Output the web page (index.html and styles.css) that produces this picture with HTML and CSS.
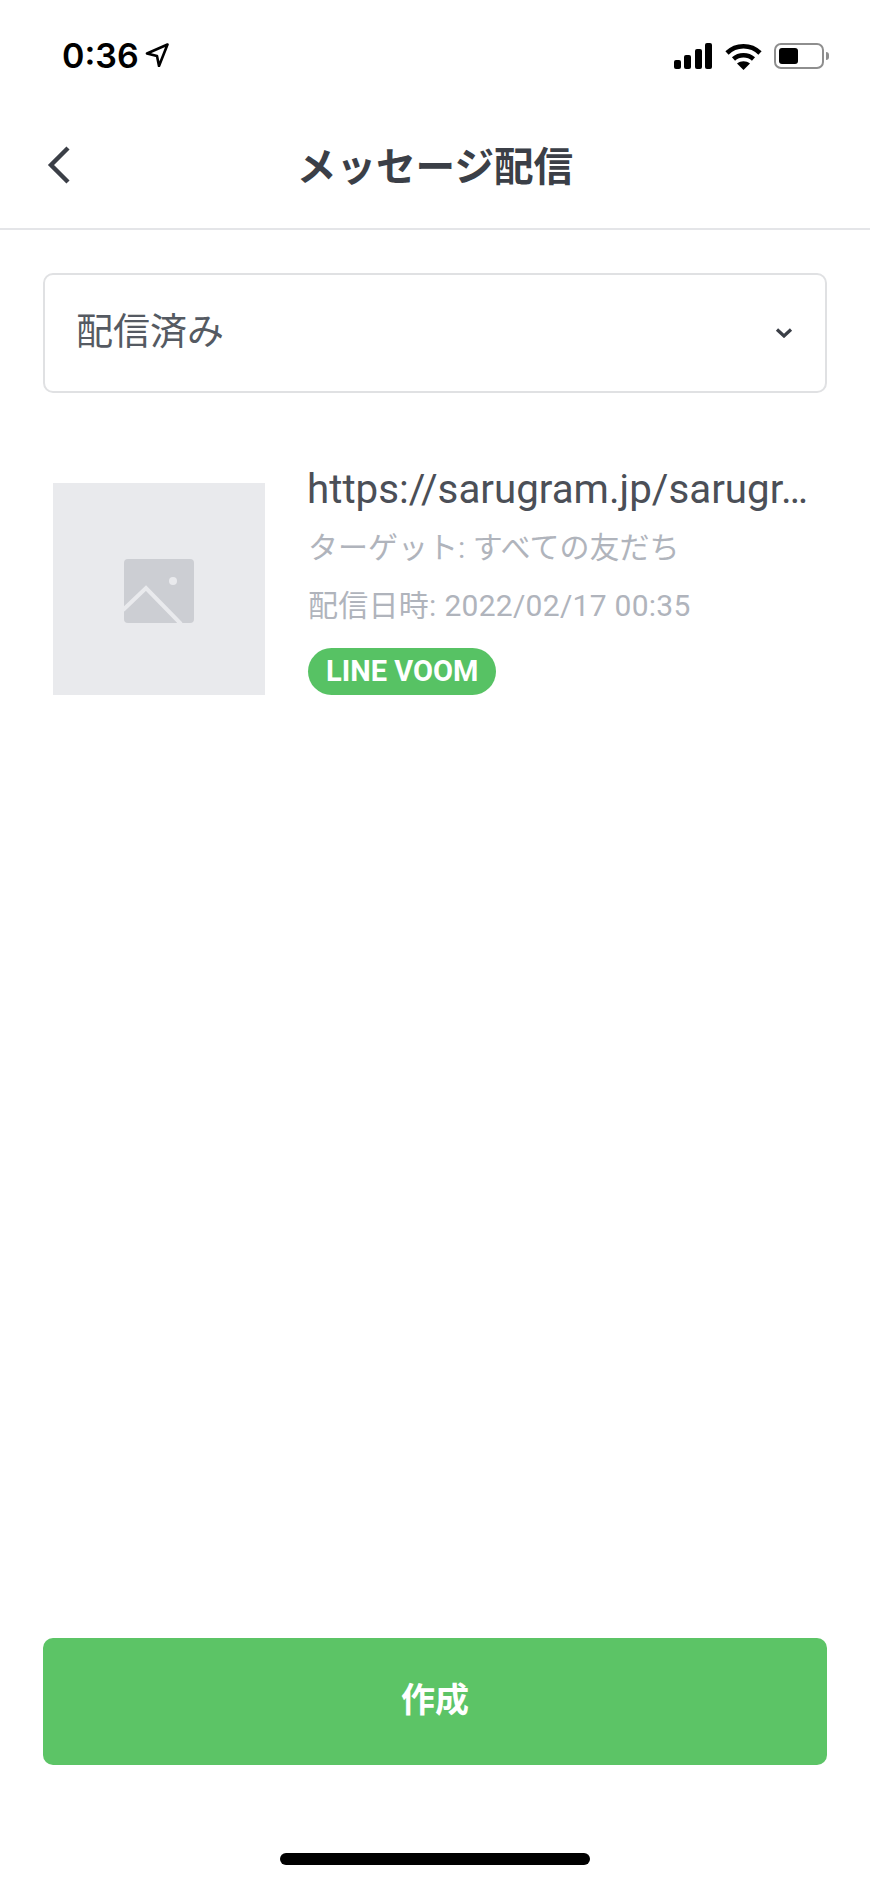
FILE: index.html
```html
<!DOCTYPE html>
<html lang="ja">
<head>
    <meta charset="UTF-8">
    <meta name="viewport" content="width=device-width, initial-scale=1.0">
    <title>メッセージ配信</title>
    <link rel="stylesheet" href="styles.css">
</head>
<body>
    <div class="screen">
        <div class="status-bar">
            <div class="status-time">
                <span>0:36</span>
                <svg class="status-arrow" width="24" height="24" viewBox="0 0 24 24">
                    <path d="M22.5 1.5 L2 10.5 L12 13 L14 23 Z" fill="none" stroke="#000" stroke-width="2.6" stroke-linejoin="round"/>
                </svg>
            </div>
            <div class="status-icons">
                <svg width="39" height="26" viewBox="0 0 39 26">
                    <rect x="0" y="17" width="7" height="9" rx="2"/>
                    <rect x="10" y="12" width="7" height="14" rx="2"/>
                    <rect x="21" y="6" width="7" height="20" rx="2"/>
                    <rect x="31" y="0" width="7" height="26" rx="2"/>
                </svg>
                <svg width="37" height="27" viewBox="0 0 37 27">
                    <path d="M2 10 C11 1 26 1 35 10" fill="none" stroke="#000" stroke-width="4.6"/>
                    <path d="M8.5 16 C14 11 23 11 28.5 16" fill="none" stroke="#000" stroke-width="4.6"/>
                    <path d="M18.5 27 L12 20.5 C16 17.5 21 17.5 25 20.5 Z"/>
                </svg>
                <div class="battery">
                    <div class="battery-body"><div class="battery-level"></div></div>
                    <div class="battery-tip"></div>
                </div>
            </div>
        </div>

        <header class="nav-bar">
            <svg class="nav-back" width="24" height="38" viewBox="0 0 24 38">
                <path d="M21 2 L4 19 L21 36" fill="none" stroke="#3b3f47" stroke-width="4.4"/>
            </svg>
            <h1 class="nav-title">メッセージ配信</h1>
        </header>

        <main class="content">
            <div class="select-box">
                <span class="select-label">配信済み</span>
                <svg width="18" height="10" viewBox="0 0 18 10">
                    <path d="M2 1.5 L9 8 L16 1.5" fill="none" stroke="#3b3f47" stroke-width="3.2"/>
                </svg>
            </div>

            <div class="post-item">
                <div class="post-thumb">
                    <svg width="70" height="64" viewBox="0 0 70 64">
                        <rect x="0" y="0" width="70" height="64" rx="4" fill="#ccced3"/>
                        <circle cx="49" cy="22" r="4" fill="#e9eaed"/>
                        <path d="M-1 51 L22 29 L57 65" fill="none" stroke="#e9eaed" stroke-width="4"/>
                    </svg>
                </div>
                <div class="post-info">
                    <div class="post-url">https://sarugram.jp/sarugr…</div>
                    <div class="post-meta post-target">ターゲット: すべての友だち</div>
                    <div class="post-meta post-date">配信日時: 2022/02/17 00:35</div>
                    <span class="post-badge">LINE VOOM</span>
                </div>
            </div>
        </main>

        <div class="footer">
            <button class="create-btn">作成</button>
            <div class="home-bar"></div>
        </div>
    </div>
</body>
</html>
```

FILE: styles.css
```css
body {
    margin: 0;
    padding: 0;
    background-color: #fff;
    font-family: Roboto, "Noto Sans CJK JP", sans-serif;
}
.screen {
    display: flex;
    flex-direction: column;
    width: 870px;
    height: 1883px;
    overflow: hidden;
}
.status-bar {
    display: flex;
    justify-content: space-between;
    align-items: center;
    height: 112px;
    padding: 0 41px 0 62px;
    box-sizing: border-box;
}
.status-time {
    display: flex;
    align-items: center;
    gap: 6px;
    padding-bottom: 2px;
    font-family: Inter, sans-serif;
    font-size: 34px;
    font-weight: 600;
    color: #000;
}
.status-icons {
    display: flex;
    align-items: center;
    gap: 12px;
}
.battery {
    display: flex;
    align-items: center;
    gap: 2px;
}
.battery-body {
    width: 50px;
    height: 26px;
    box-sizing: border-box;
    padding: 3px;
    border: 2px solid #8e8e8e;
    border-radius: 7px;
}
.battery-level {
    width: 19px;
    height: 100%;
    background-color: #000;
    border-radius: 3px;
}
.battery-tip {
    width: 3px;
    height: 8px;
    background-color: #8e8e8e;
    border-radius: 0 3px 3px 0;
}
.nav-bar {
    position: relative;
    display: flex;
    justify-content: center;
    align-items: center;
    height: 118px;
    box-sizing: border-box;
    padding-bottom: 14px;
    border-bottom: 2px solid #e4e5e8;
}
.nav-back {
    position: absolute;
    left: 47px;
    top: 34px;
}
.nav-title {
    margin: 0;
    font-size: 39.6px;
    font-weight: 700;
    color: #3b3f47;
}
.content {
    flex: 1;
    padding: 43px 43px 0;
}
.select-box {
    display: flex;
    justify-content: space-between;
    align-items: center;
    height: 120px;
    box-sizing: border-box;
    padding: 0 32px 0 31px;
    border: 2px solid #e0e1e3;
    border-radius: 10px;
}
.select-label {
    padding-bottom: 8px;
    font-size: 37px;
    color: #555a62;
}
.post-item {
    display: flex;
    gap: 43px;
    margin-top: 90px;
    padding-left: 10px;
}
.post-thumb {
    display: flex;
    justify-content: center;
    align-items: center;
    flex-shrink: 0;
    width: 212px;
    height: 212px;
    background-color: #e9eaed;
}
.post-thumb svg {
    margin-top: 3px;
}
.post-info {
    display: flex;
    flex-direction: column;
    align-items: flex-start;
    margin-top: -22px;
}
.post-url {
    margin-left: -1px;
    font-size: 40.3px;
    line-height: 58px;
    color: #4b4f57;
    white-space: nowrap;
}
.post-meta {
    font-size: 30px;
    line-height: 42px;
    color: #b0b4bc;
    white-space: nowrap;
}
.post-target {
    margin-top: 8px;
}
.post-date {
    margin-top: 16px;
    letter-spacing: 0.28px;
}
.post-badge {
    margin-top: 21px;
    height: 47px;
    line-height: 47px;
    padding: 0 18px;
    border-radius: 24px;
    background-color: #57c264;
    color: #fff;
    font-size: 29px;
    font-weight: 700;
}
.footer {
    display: flex;
    flex-direction: column;
    align-items: center;
    padding: 0 43px 18px;
}
.create-btn {
    width: 100%;
    height: 127px;
    padding: 0 0 8px;
    border: none;
    border-radius: 10px;
    background-color: #5cc466;
    color: #fff;
    font-family: inherit;
    font-size: 34px;
    font-weight: 700;
}
.home-bar {
    width: 310px;
    height: 12px;
    margin-top: 88px;
    background-color: #000;
    border-radius: 6px;
}
```
